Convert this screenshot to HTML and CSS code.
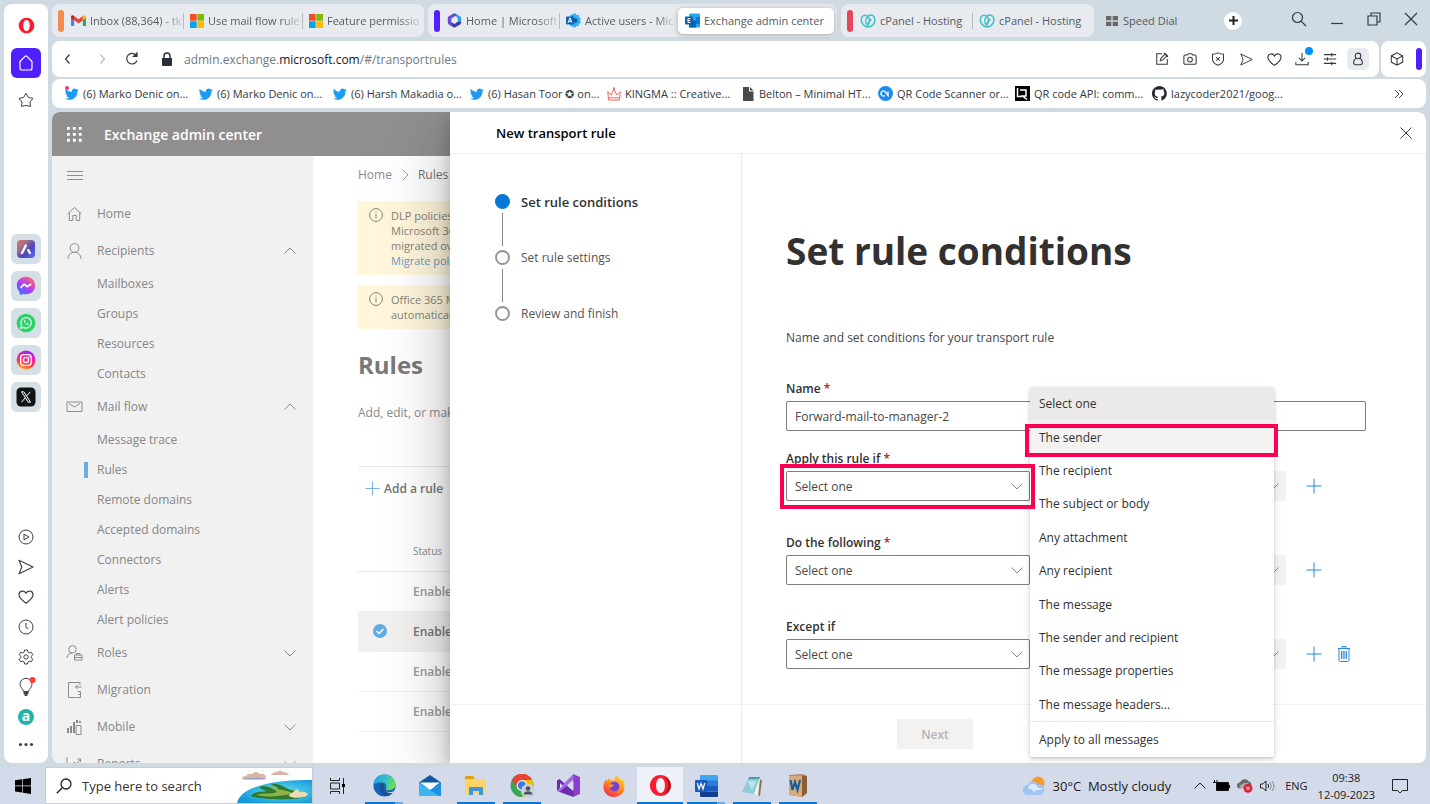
FILE: index.html
```html
<!DOCTYPE html>
<html lang="en">
<head>
    <meta charset="UTF-8" />
    <meta name="viewport" content="width=device-width, initial-scale=1.0" />
    <title>Exchange admin center</title>
    <link rel="stylesheet" href="styles.css">
</head>
<body>

    <!-- shared icons -->
    <svg class="sprite" aria-hidden="true">
        <symbol id="i-ms" viewBox="0 0 14 14">
            <path fill="#f25022" d="M0 0h6.7v6.7H0z"/><path fill="#7fba00" d="M7.3 0H14v6.7H7.3z"/>
            <path fill="#00a4ef" d="M0 7.3h6.7V14H0z"/><path fill="#ffb900" d="M7.3 7.3H14V14H7.3z"/>
        </symbol>
        <symbol id="i-twitter" viewBox="0 0 24 24">
            <path fill="#1d9bf0" d="M23.6 4.9c-.9.4-1.8.6-2.8.8 1-.6 1.8-1.6 2.1-2.7-.9.6-2 1-3.1 1.2A4.9 4.9 0 0 0 11.5 8.600A13.900 13.900 0 0 1 1.400 3.500a4.900 4.900 0 0 0 1.500 6.500c-.8 0-1.600-.2-2.200-.6v.1c0 2.400 1.700 4.300 3.900 4.800-.7.2-1.500.2-2.200.1.600 1.900 2.400 3.300 4.600 3.400A9.800 9.800 0 0 1-.2 19.800a13.900 13.900 0 0 0 7.500 2.200c9.100 0 14-7.500 14-14v-.6c1-.7 1.800-1.600 2.300-2.500z"/>
        </symbol>
        <symbol id="i-godaddy" viewBox="0 0 16 16">
            <g fill="none" stroke="#3fc1c9" stroke-width="1.500">
                <path d="M7.500 14C3.500 13 .8 9.500 1.300 6 1.800 2.300 5.500 1.200 8 3.800c2 2.200 1.800 5.200.2 7.400"/>
                <path d="M7.500 14.300c4.800-.3 8-4.300 7.300-8.500C14.200 2 10.500.8 8 3.200 5.500 5.600 5 9 7 11.500M8.500 14c-1.200-1.500-.8-3.500.8-5.500l2-2.500"/>
            </g>
        </symbol>
        <symbol id="i-down" viewBox="0 0 12 12"><path fill="none" stroke="currentColor" d="M.5 3.500 6 9l5.500-5.500"/></symbol>
        <symbol id="i-up" viewBox="0 0 12 12"><path fill="none" stroke="currentColor" d="M.5 8.500 6 3l5.500 5.500"/></symbol>
        <symbol id="i-plus" viewBox="0 0 16 16"><path fill="none" stroke="currentColor" d="M8 .5v15M.5 8h15"/></symbol>
        <symbol id="i-info" viewBox="0 0 14 14"><circle cx="7" cy="7" r="6.400" fill="none" stroke="currentColor"/><path stroke="currentColor" d="M7 6v4.500M7 3.500v1.200"/></symbol>
        <symbol id="i-heart" viewBox="0 0 16 16"><path fill="none" stroke="currentColor" stroke-width="1.200" d="M8 14.300C4 11.500 1 8.800 1 5.600 1 1.600 6.200.8 8 4.200 9.800.8 15 1.600 15 5.600c0 3.200-3 5.900-7 8.700z"/></symbol>
        <symbol id="i-send" viewBox="0 0 16 16"><path fill="none" stroke="currentColor" stroke-width="1.200" stroke-linejoin="round" d="M1 1.200 15 8 1 14.800 3.800 8z"/></symbol>
        <symbol id="i-opera" viewBox="0 0 24 24">
            <path fill="#ff1b2d" fill-rule="evenodd" d="M12 1C5.900 1 1 5.900 1 12s4.900 11 11 11 11-4.900 11-11S18.100 1 12 1zm0 3.200c3 0 4.600 3.600 4.600 7.800s-1.600 7.800-4.600 7.800S7.400 16.200 7.400 12 9 4.200 12 4.200z"/>
        </symbol>
    </svg>

    <div class="browser">

        <aside class="speedbar">
            <div class="speedbar-top">
                <svg class="logo" viewBox="0 0 24 24"><use href="#i-opera"/></svg>
                <button class="home-btn" aria-label="Home">
                    <svg width="16" height="18" viewBox="0 0 16 18" fill="none" stroke="#fff" stroke-width="1.200"><path d="M2 7.500 7 2.300q1-1 2 0l5 5.200V14q0 2-2 2H4q-2 0-2-2z"/></svg>
                </button>
                <svg class="side-icon" viewBox="0 0 16 16"><path d="M8 1.200 10.300 5.400 15 6.400 12 10 12.500 14.500 8 13.300 3.500 14.500 4 10 1 6.400 5.700 5.400z"/></svg>
            </div>
            <div class="speedbar-apps">
                <button class="app" aria-label="Aria">
                    <svg width="18" height="18" viewBox="0 0 18 18"><defs><linearGradient id="g1" x1="0" y1="0" x2="1" y2="1"><stop offset="0" stop-color="#e0715a"/><stop offset=".3" stop-color="#a8708c"/><stop offset=".6" stop-color="#4c48b8"/><stop offset="1" stop-color="#5b6cff"/></linearGradient></defs><rect width="18" height="18" rx="4" fill="url(#g1)"/><path d="m5 13 3.800-7.500M11.300 10l1.500 3" stroke="#fff" stroke-width="2.400" stroke-linecap="round"/></svg>
                </button>
                <button class="app" aria-label="Messenger">
                    <svg width="20" height="20" viewBox="0 0 20 20"><defs><linearGradient id="g2" x1="0" y1="1" x2=".8" y2="0"><stop offset="0" stop-color="#0a8cff"/><stop offset=".5" stop-color="#a83cff"/><stop offset="1" stop-color="#ff6a66"/></linearGradient></defs><path fill="url(#g2)" d="M10 .8C4.800.8.800 4.500.800 9.600c0 2.600 1.100 4.700 2.800 6.300l.2 3.200 3-1.200c1 .3 2.100.4 3.200.4 5.200 0 9.200-3.700 9.200-8.700S15.200.8 10 .8z"/><path d="m4.500 11.800 3.600-3.700 3 2.500 4.200-2.500" fill="none" stroke="#fff" stroke-width="1.800"/></svg>
                </button>
                <button class="app" aria-label="WhatsApp">
                    <svg width="20" height="20" viewBox="0 0 20 20"><circle cx="10" cy="10" r="9.300" fill="#2bd366"/><path d="m4.800 15.200.8-2.800a5.200 5.200 0 1 1 2 2z" fill="none" stroke="#fff" stroke-width="1.200"/><path d="M8 7.300c-.2 2.400 2 4.600 4.500 4.700l.3-1.200-1.500-.6-.8.600c-.8-.3-1.200-.8-1.500-1.500l.5-.7-.5-1.400z" fill="#fff"/></svg>
                </button>
                <button class="app" aria-label="Instagram">
                    <svg width="20" height="20" viewBox="0 0 20 20"><defs><linearGradient id="g3" x1=".2" y1="1" x2=".6" y2="0"><stop offset="0" stop-color="#ffc43a"/><stop offset=".35" stop-color="#ff3d3d"/><stop offset=".7" stop-color="#f01bb0"/><stop offset="1" stop-color="#8a2bff"/></linearGradient></defs><circle cx="10" cy="10" r="9.400" fill="url(#g3)"/><g fill="none" stroke="#fff" stroke-width="1.300"><rect x="4.700" y="4.700" width="10.600" height="10.600" rx="3"/><circle cx="10" cy="10" r="2.600"/></g><circle cx="13" cy="7" r=".8" fill="#fff"/></svg>
                </button>
                <button class="app" aria-label="X">
                    <svg width="20" height="20" viewBox="0 0 20 20"><rect x=".5" y=".5" width="19" height="19" rx="4.500" fill="#111417"/><path d="M5.500 4.800h2.300l6.700 10.400h-2.300zM14.300 4.800l-4 4.500M9.200 10.900l-3.700 4.300" fill="none" stroke="#fff"/></svg>
                </button>
            </div>
            <div class="speedbar-tools">
                <svg class="side-icon" viewBox="0 0 16 16"><circle cx="8" cy="8" r="7"/><path d="M6 5.200 11 8l-5 2.800z"/></svg>
                <svg class="side-icon"><use href="#i-send"/></svg>
                <svg class="side-icon"><use href="#i-heart"/></svg>
                <svg class="side-icon" viewBox="0 0 16 16"><circle cx="8" cy="8" r="7"/><path d="M8 4v4.500l2.500 1.200"/></svg>
                <svg class="side-icon" viewBox="0 0 16 16"><path d="M6.600 1h2.800l.5 2 1.500.9 2-.6 1.400 2.400L13.300 7.200v1.600l1.500 1.500-1.400 2.400-2-.6-1.500.9-.5 2H6.600l-.5-2-1.500-.9-2 .6-1.400-2.400 1.500-1.500V7.200L1.200 5.700l1.400-2.400 2 .6L6.100 3z"/><circle cx="8" cy="8" r="2.200"/></svg>
                <svg class="side-icon bulb" viewBox="0 0 16 20"><path d="M5.500 14.500C5.500 12 2 11 2 7.300a6 6 0 0 1 12 0c0 3.700-3.500 4.700-3.500 7.200z"/><path d="M5.500 16h5M6.500 18h3" stroke-width="1.800"/><circle class="dot" cx="14.500" cy="3" r="3"/></svg>
                <span class="alexa">a</span>
                <svg class="side-icon more" viewBox="0 0 16 16"><circle cx="2.500" cy="5.500" r="1.600"/><circle cx="8" cy="5.500" r="1.600"/><circle cx="13.500" cy="5.500" r="1.600"/></svg>
            </div>
        </aside>

        <div class="window">

            <header class="tabs">
                <div class="tab-group">
                    <span class="group-mark orange"></span>
                    <a class="tab" href="#">
                        <svg width="15" height="14" viewBox="0 0 15 14"><path fill="#4285f4" d="M0 3v9h3.200V5.500z"/><path fill="#34a853" d="M15 3v9h-3.200V5.500z"/><path fill="#ea4335" d="M3.200 2 7.500 5.300 11.800 2v4.200L7.500 9.500 3.200 6.200z"/><path fill="#c5221f" d="M0 3c0-1.800 1.900-2.200 3.200-1v4.200L0 4z"/><path fill="#fbbc04" d="M15 3c0-1.800-1.900-2.200-3.200-1v4.200L15 4z"/></svg>
                        <span class="cut">Inbox (88,364) - tk</span>
                    </a>
                    <a class="tab" href="#"><svg width="14" height="14"><use href="#i-ms"/></svg><span class="cut">Use mail flow rule</span></a>
                    <a class="tab" href="#"><svg width="14" height="14"><use href="#i-ms"/></svg><span class="cut">Feature permissio</span></a>
                </div>
                <div class="tab-group">
                    <span class="group-mark purple"></span>
                    <a class="tab" href="#">
                        <svg width="15" height="15" viewBox="0 0 15 15"><path fill="#6a4bd8" d="M6.500.5 1.800 3.300Q.8 4 .8 5.200v4.600q0 1.200 1 1.800l2.400 1.300V6.500q0-1 .8-1.500L9 2.700V.9Q7.800-.2 6.500.5z"/><path fill="#2ba3e3" d="M13.300 3.400 9 .8v2.400q1.800 1 1.800 3V9l3.400 1V5.200q0-1.200-.9-1.800z"/><path fill="#3b3fa8" d="m4.200 12.900 2.400 1.400q.9.500 1.800 0l4.800-2.800q1-.7 1-2.200l-3.500-.6L7.500 11l-3.300-2z"/></svg>
                        <span class="cut">Home | Microsoft</span>
                    </a>
                    <a class="tab" href="#">
                        <svg width="15" height="15" viewBox="0 0 15 15"><path fill="#31b2f0" d="m9 0 1.300 1.900 2.400-.2.200 2.400L15 5.500 13.900 7.600 15 9.700l-2.100 1.200-.2 2.400-2.400-.2L9 15l-2.100-1.200L4 13V2l2.900-.7z"/><circle cx="9.300" cy="7.600" r="2.300" fill="#0b5fa8"/><rect y="3.500" width="8" height="8" rx="1" fill="#0f5fb4"/><path stroke="#fff" fill="none" d="m2 9.800 2-5 2 5M2.800 8.300h2.400"/></svg>
                        <span class="cut">Active users - Mic</span>
                    </a>
                    <a class="tab active" href="#">
                        <svg width="15" height="15" viewBox="0 0 15 15"><rect x="4" y=".5" width="11" height="14" rx="1" fill="#28a8ea"/><path fill="#0364b8" d="M4 7.500h7v7H4z"/><path fill="#0f78d4" d="M11 4h4v7h-4z"/><rect y="3.500" width="8" height="8" rx="1" fill="#0f5fb4"/><path stroke="#fff" fill="none" d="M5.500 5.500H3v4h2.500M3 7.500h2.200"/></svg>
                        <span>Exchange admin center</span>
                    </a>
                </div>
                <div class="tab-group">
                    <span class="group-mark red"></span>
                    <a class="tab" href="#"><svg width="16" height="16"><use href="#i-godaddy"/></svg><span>cPanel - Hosting</span></a>
                    <a class="tab" href="#"><svg width="16" height="16"><use href="#i-godaddy"/></svg><span>cPanel - Hosting</span></a>
                </div>
                <a class="speed-dial" href="#">
                    <svg width="12" height="10" viewBox="0 0 12 10"><path fill="#666" d="M0 0h5.300v4.300H0zM6.700 0H12v4.300H6.700zM0 5.700h5.300V10H0zM6.700 5.700H12V10H6.700z"/></svg>
                    Speed Dial
                </a>
                <button class="new-tab" aria-label="New tab"><svg width="9" height="9" viewBox="0 0 9 9"><path stroke="#222" stroke-width="2" d="M4.500 0v9M0 4.500h9"/></svg></button>
                <div class="win-buttons">
                    <button aria-label="Search tabs"><svg width="16" height="16" viewBox="0 0 16 16"><circle cx="6.500" cy="6.500" r="5"/><path d="m10.300 10.300 4.700 4.700"/></svg></button>
                    <button aria-label="Minimize"><svg width="14" height="14" viewBox="0 0 14 14"><path d="M1 11.500h12"/></svg></button>
                    <button aria-label="Restore"><svg width="14" height="14" viewBox="0 0 14 14"><path d="M1 4h9v9H1zM4 4V1h9v9h-3"/></svg></button>
                    <button aria-label="Close"><svg width="14" height="14" viewBox="0 0 14 14"><path d="m1 1 12 12M13 1 1 13"/></svg></button>
                </div>
            </header>

            <div class="toolbar">
                <div class="address">
                    <button aria-label="Back"><svg width="16" height="16" viewBox="0 0 16 16"><path d="m9.500 3.500-4 4.500 4 4.500"/></svg></button>
                    <button class="off" aria-label="Forward"><svg width="16" height="16" viewBox="0 0 16 16"><path d="m8.500 3.500 4 4.500-4 4.500"/></svg></button>
                    <button aria-label="Reload"><svg width="16" height="16" viewBox="0 0 16 16"><path d="M13 9.500A5.300 5.300 0 1 1 12 4.200"/><path d="M13 2v3.500H9.500z" fill="#333"/></svg></button>
                    <svg class="lock" width="12" height="14" viewBox="0 0 12 14"><path fill="#2a3037" d="M1 6h10v7q0 1-1 1H2q-1 0-1-1z"/><path fill="none" stroke="#2a3037" stroke-width="1.400" d="M3 6V4q0-3 3-3t3 3v2"/></svg>
                    <span class="url">admin.exchange.<b>microsoft.com</b>/#/transportrules</span>
                    <div class="actions">
                        <button aria-label="Edit page"><svg width="14" height="14" viewBox="0 0 16 16"><path d="M8 2H2v12h12V8"/><path d="m6 10 3-1 5-5-2-2-5 5zM10 1l5 5"/></svg></button>
                        <button aria-label="Snapshot"><svg width="14" height="14" viewBox="0 0 16 16"><path d="M1 5q0-1.500 1.500-1.500H5L6 2h4l1 1.500h2.500Q15 3.500 15 5v7.500q0 1.500-1.500 1.500h-11Q1 14 1 12.500z"/><circle cx="8" cy="8.700" r="2.700"/></svg></button>
                        <button aria-label="Ad blocker"><svg width="14" height="14" viewBox="0 0 16 16"><path d="M8 1q3 1.500 6.300 1.500V8q0 5-6.300 7.200Q1.700 13 1.700 8V2.500Q5 2.500 8 1zM6 6l4 4M10 6l-4 4"/></svg></button>
                        <button aria-label="Send to My Flow"><svg width="13" height="13"><use href="#i-send"/></svg></button>
                        <button aria-label="Bookmark"><svg width="15" height="15"><use href="#i-heart"/></svg></button>
                        <button class="dl" aria-label="Downloads"><svg width="14" height="14" viewBox="0 0 16 16"><path d="M8 1v9M4.500 6.800 8 10.300l3.500-3.500M1 11v3.500h14V11"/></svg></button>
                        <button aria-label="Easy setup"><svg width="14" height="14" viewBox="0 0 16 16"><path d="M1 3h14M1 8h14M1 13h14M10 1v4M5 6v4M10 11v4"/></svg></button>
                        <button class="user" aria-label="Profile"><svg width="14" height="14" viewBox="0 0 16 16"><circle cx="8" cy="4.500" r="3.200"/><path d="M5.500 7.500Q3 9 3 12q0 2.500 2.500 2.500h5Q13 14.500 13 12q0-3-2.500-4.500"/></svg></button>
                    </div>
                </div>
                <div class="corner">
                    <button aria-label="Workspaces"><svg width="14" height="14" viewBox="0 0 16 16"><path d="m8 1 6.500 3.500v7L8 15l-6.500-3.500v-7zM1.500 4.500 8 8l6.500-3.500M8 8v7"/></svg></button>
                    <span class="group-mark purple"></span>
                </div>
            </div>

            <nav class="bookmarks">
                <a class="short pinned" href="#"><svg width="14" height="14"><use href="#i-twitter"/></svg>(6) Marko Denic on...</a>
                <a class="short" href="#"><svg width="14" height="14"><use href="#i-twitter"/></svg>(6) Marko Denic on...</a>
                <a href="#"><svg width="14" height="14"><use href="#i-twitter"/></svg>(6) Harsh Makadia o...</a>
                <a href="#"><svg width="14" height="14"><use href="#i-twitter"/></svg>(6) Hasan Toor ✪ on...</a>
                <a class="short" href="#"><svg width="14" height="14" viewBox="0 0 14 14"><path fill="none" stroke="#f2605f" d="M1.500 13 .8 4.500 4.200 8 7 2l2.800 6 3.400-3.500-.7 8.500zM1.500 10.800h11"/><circle cx="7" cy="1.200" r="1" fill="#f2605f"/></svg>KINGMA :: Creative...</a>
                <a href="#"><svg width="14" height="14" viewBox="0 0 14 14"><path fill="#4a4a4a" d="M2 0h6v4.500h4.500V14H2zM9 0l3.500 3.500H9z"/></svg>Belton – Minimal HT...</a>
                <a href="#"><svg width="15" height="15" viewBox="0 0 15 15"><circle cx="7.500" cy="7.500" r="7.500" fill="#1a8cf0"/><path fill="none" stroke="#fff" stroke-width="1.300" d="M7 9.500a2.500 2.500 0 1 1 0-4l3 4V5.500"/></svg>QR Code Scanner or...</a>
                <a href="#"><svg width="15" height="15" viewBox="0 0 15 15"><path d="M0 0h15v15H0z"/><path fill="none" stroke="#fff" stroke-width="1.500" d="M2.500 2v8.500H7M5 4h6v6H7.500L12 13.500"/></svg>QR code API: comm...</a>
                <a href="#"><svg width="15" height="15" viewBox="0 0 16 16"><path fill="#24292f" d="M8 0a8 8 0 0 0-2.500 15.600c.4.100.5-.2.500-.4v-1.400c-2.200.5-2.700-1-2.700-1-.4-.9-.9-1.200-.9-1.200-.7-.5.100-.5.100-.5.800.1 1.200.8 1.200.8.700 1.300 1.900.9 2.300.7.100-.5.300-.9.500-1.100-1.800-.2-3.600-.9-3.600-4 0-.9.300-1.600.8-2.100-.1-.2-.4-1 .1-2.100 0 0 .7-.2 2.200.8a7.500 7.500 0 0 1 4 0c1.500-1 2.200-.8 2.200-.8.400 1.100.2 1.900.1 2.100.5.600.8 1.300.8 2.100 0 3.100-1.900 3.700-3.700 3.900.3.300.6.800.6 1.500v2.200c0 .2.100.5.600.4A8 8 0 0 0 8 0z"/></svg>lazycoder2021/goog...</a>
                <button class="overflow" aria-label="More bookmarks"><svg width="10" height="8" viewBox="0 0 10 8"><path fill="none" stroke="#444" d="m1 0 4 4-4 4M5 0l4 4-4 4"/></svg></button>
            </nav>

            <!-- Exchange admin center -->
            <div class="page">
                <header class="suite">
                    <svg width="15" height="15" viewBox="0 0 16 16" fill="#fff"><path d="M0 0h3v3H0zM6.300 0h3v3h-3zM12.600 0h3v3h-3zM0 6.300h3v3H0zM6.300 6.300h3v3h-3zM12.600 6.300h3v3h-3zM0 12.600h3v3H0zM6.300 12.600h3v3h-3zM12.600 12.600h3v3h-3z"/></svg>
                    <span>Exchange admin center</span>
                </header>

                <div class="body">
                    <nav class="side-nav">
                        <button class="burger" aria-label="Collapse navigation"><svg width="16" height="10" viewBox="0 0 16 10"><path stroke="#8c8c8c" d="M0 .5h16M0 4.500h16M0 8.500h16"/></svg></button>
                        <a class="top" href="#"><svg viewBox="0 0 16 16"><path d="M1 8 8 1.500 15 8M2.800 6.500V14.500h3.500v-5h3.400v5h3.500v-8"/></svg>Home</a>
                        <a class="top" href="#"><svg viewBox="0 0 16 16"><circle cx="8" cy="5" r="4.400"/><path d="M1.500 16c0-9 13-9 13 0"/></svg>Recipients<svg class="chev"><use href="#i-up"/></svg></a>
                        <a class="sub" href="#">Mailboxes</a>
                        <a class="sub" href="#">Groups</a>
                        <a class="sub" href="#">Resources</a>
                        <a class="sub" href="#">Contacts</a>
                        <a class="top" href="#"><svg viewBox="0 0 16 16"><path d="M.5 3h15v9.500H.5zM2.500 4.500 8 8l5.500-3.500"/></svg>Mail flow<svg class="chev"><use href="#i-up"/></svg></a>
                        <a class="sub" href="#">Message trace</a>
                        <a class="sub current" href="#">Rules</a>
                        <a class="sub" href="#">Remote domains</a>
                        <a class="sub" href="#">Accepted domains</a>
                        <a class="sub" href="#">Connectors</a>
                        <a class="sub" href="#">Alerts</a>
                        <a class="sub" href="#">Alert policies</a>
                        <a class="top" href="#"><svg viewBox="0 0 16 16"><circle cx="6" cy="4.300" r="3.700"/><path d="M.5 13C.5 9.500 3 8 6 8M8 10h7.500v5H8zM10 10V8.500h3.500V10M8 12.500h7.500"/></svg>Roles<svg class="chev"><use href="#i-down"/></svg></a>
                        <a class="top" href="#"><svg viewBox="0 0 16 16"><path d="M13.500 3V.5H2v15h8M15 5H9M11 3 9 5l2 2M11 9.500h3v6h-3.500M12 12.500h2" /></svg>Migration</a>
                        <a class="top" href="#"><svg viewBox="0 0 16 16"><path d="M1.500 9v5M4.500 7v7M7.500 3v11M10.500 1v3M13.500 2v2" stroke-width="2"/><path d="M9.500 6.500h5v9h-5z"/></svg>Mobile<svg class="chev"><use href="#i-down"/></svg></a>
                        <a class="top" href="#"><svg viewBox="0 0 16 16"><path d="M.5 1v14h15M3 12l5-6 2 2 4-5M11 3h3v3"/></svg>Reports<svg class="chev"><use href="#i-down"/></svg></a>
                    </nav>

                    <main class="rules">
                        <div class="crumbs"><a href="#">Home</a><svg width="8" height="12" viewBox="0 0 8 12"><path fill="none" stroke="#999" d="m1.500.5 5.500 5.500-5.500 5.500"/></svg><a href="#" class="here">Rules</a></div>
                        <div class="notice">
                            <svg width="14" height="14"><use href="#i-info"/></svg>
                            <p>DLP policies<br>Microsoft 365<br>migrated over<br><a href="#">Migrate policies</a></p>
                        </div>
                        <div class="notice">
                            <svg width="14" height="14"><use href="#i-info"/></svg>
                            <p>Office 365 M<br>automatically</p>
                        </div>
                        <h2>Rules</h2>
                        <p class="intro">Add, edit, or make</p>
                        <div class="commands"><button><svg width="15" height="15"><use href="#i-plus"/></svg>Add a rule</button></div>
                        <table>
                            <thead><tr><th class="pick"></th><th>Status</th></tr></thead>
                            <tbody>
                                <tr><td></td><td>Enabled</td></tr>
                                <tr class="selected"><td><svg width="14" height="14" viewBox="0 0 14 14"><circle cx="7" cy="7" r="7" fill="#62abe6"/><path d="m3.500 7 2.500 2.500 4.500-4.500" fill="none" stroke="#fff" stroke-width="1.500"/></svg></td><td>Enabled</td></tr>
                                <tr><td></td><td>Enabled</td></tr>
                                <tr><td></td><td>Enabled</td></tr>
                            </tbody>
                        </table>
                    </main>
                </div>

                <section class="panel">
                    <header class="panel-head">
                        <span>New transport rule</span>
                        <button aria-label="Close panel"><svg width="12" height="12" viewBox="0 0 12 12"><path stroke="#444" d="m.5.5 11 11M11.500.5l-11 11"/></svg></button>
                    </header>
                    <div class="panel-body">
                        <ol class="steps">
                            <li class="on">Set rule conditions</li>
                            <li>Set rule settings</li>
                            <li>Review and finish</li>
                        </ol>
                        <form class="conditions">
                            <h1>Set rule conditions</h1>
                            <p>Name and set conditions for your transport rule</p>

                            <div class="field">
                                <label for="name">Name <i>*</i></label>
                                <input type="text" id="name" value="Forward-mail-to-manager-2">
                            </div>

                            <div class="field">
                                <label for="apply">Apply this rule if <i>*</i></label>
                                <div class="row">
                                    <div class="select"><select id="apply"><option>Select one</option></select><svg><use href="#i-down"/></svg></div>
                                    <div class="select off"><select disabled aria-label="Condition"><option></option></select><svg><use href="#i-down"/></svg></div>
                                    <button type="button" aria-label="Add condition"><svg width="16" height="16"><use href="#i-plus"/></svg></button>

                                    <div class="menu">
                                        <div class="options">
                                            <button type="button" class="picked">Select one</button>
                                            <button type="button" class="hover">The sender</button>
                                            <button type="button">The recipient</button>
                                            <button type="button">The subject or body</button>
                                            <button type="button">Any attachment</button>
                                            <button type="button">Any recipient</button>
                                            <button type="button">The message</button>
                                            <button type="button">The sender and recipient</button>
                                            <button type="button">The message properties</button>
                                            <button type="button">The message headers...</button>
                                        </div>
                                        <button type="button" class="all">Apply to all messages</button>
                                        <span class="mark mark-option"></span>
                                    </div>
                                    <span class="mark mark-select"></span>
                                </div>
                            </div>

                            <div class="field">
                                <label for="do">Do the following <i>*</i></label>
                                <div class="row">
                                    <div class="select"><select id="do"><option>Select one</option></select><svg><use href="#i-down"/></svg></div>
                                    <div class="select off"><select disabled aria-label="Action"><option></option></select><svg><use href="#i-down"/></svg></div>
                                    <button type="button" aria-label="Add action"><svg width="16" height="16"><use href="#i-plus"/></svg></button>
                                </div>
                            </div>

                            <div class="field">
                                <label for="except">Except if</label>
                                <div class="row">
                                    <div class="select"><select id="except"><option>Select one</option></select><svg><use href="#i-down"/></svg></div>
                                    <div class="select off"><select disabled aria-label="Exception"><option></option></select><svg><use href="#i-down"/></svg></div>
                                    <button type="button" aria-label="Add exception"><svg width="16" height="16"><use href="#i-plus"/></svg></button>
                                    <button type="button" aria-label="Delete exception"><svg width="12" height="16" viewBox="0 0 12 16"><path fill="none" stroke="currentColor" d="M0 2.500h12M4 2.500v-2h4v2M1 2.500v11.500q0 1.500 1.500 1.500h7q1.500 0 1.500-1.500V2.500M3.500 5v8M5.200 5v8M6.900 5v8M8.600 5v8"/></svg></button>
                                </div>
                            </div>
                        </form>
                    </div>
                    <footer class="panel-foot"><div><button disabled>Next</button></div></footer>
                </section>
            </div>
        </div>
    </div>

    <footer class="taskbar">
        <button class="start" aria-label="Start"><svg width="16" height="16" viewBox="0 0 16 16"><path d="M0 2.300 7 1.300V7.600H0zM7.700 1.200 16 0v7.600H7.700zM0 8.300h7v6.300l-7-1zM7.700 8.300H16V16l-8.300-1.200z"/></svg></button>
        <div class="search">
            <svg width="16" height="16" viewBox="0 0 16 16"><path fill="none" stroke="#222" stroke-width="1.300" d="M6 10 .8 15.200"/><circle cx="10" cy="6" r="5" fill="none" stroke="#222" stroke-width="1.300"/></svg>
            <input type="text" placeholder="Type here to search" aria-label="Search">
            <svg class="island" width="76" height="34" viewBox="0 0 76 34">
                <defs><radialGradient id="sea" cx=".6" cy=".5" r=".6"><stop offset="0" stop-color="#5fe3ee"/><stop offset="1" stop-color="#1899dc"/></radialGradient></defs>
                <path fill="url(#sea)" d="M1 34C4 19 34 10 76 11v23z"/>
                <path fill="#d8b5a6" d="M6 10q0-3 4-3 2-3 6-2 4-4 8 0 6-1 6 5zM35 6q2-3 6-3 3-3 6 0 5 0 6 3z"/>
                <path fill="#8d9bc8" d="M6 10.500q4-2 12-1.500 8-1 12 1.500z"/>
                <path fill="#2d7a2f" d="M15 27c3-5 10-4 16-5-8-2-10-4-4-5 8 1 10 3 16 4-2-4-6-4-8-6 8-1 12 3 20 6 10 1 15 4 17 6-8 5-50 4-57 0z"/>
                <path fill="#8fb14a" d="M20 26c8-3 16 0 21-3-2-3-8-4-8-6 6 0 8 4 14 4 6 1 10 3 8 4-12 3-28 3-35 1z"/>
                <path fill="#e8dcb0" d="M53 27c0-3 4-3 5-5 3-3 5-1 6 1 4-1 8 1 8 3-2 3-16 4-19 1z"/>
            </svg>
        </div>
        <div class="apps">
            <button aria-label="Task view"><svg width="18" height="16" viewBox="0 0 18 16"><path fill="none" stroke="#222" d="M1.500 0v2.500h9V0M1.500 5h9v6h-9zM1.500 16v-2.500h9V16M14.500 0v16"/><path d="M13 6h3v3h-3z"/></svg></button>
            <button class="open more" aria-label="Edge"><svg width="23" height="23" viewBox="0 0 24 24"><defs><linearGradient id="e1" x1="0" y1="0" x2="1" y2=".3"><stop offset="0" stop-color="#1b9de2"/><stop offset=".6" stop-color="#35c1c9"/><stop offset="1" stop-color="#67dd5a"/></linearGradient></defs><circle cx="12" cy="12" r="11.500" fill="#1564b4"/><path fill="url(#e1)" d="M.6 11C1 4.500 6 .5 12 .5c6.500 0 11.500 4.700 11.500 10 0 4-3 6.500-6.500 6.500-3 0-4-1-3.500-2 1.500-2.500-.5-6.500-4.500-6.500-4 0-7.400 1-8.400 2.500z"/><path fill="#1b4f94" d="M9 9.500c-3 3-3 10 4 13.300 4 .2 7.500-2 9-4.800-5 2.500-11 0-11-4.500 0-2 0-3-2-4z"/><path fill="#d3daea" d="M13.400 15c-2.400 2.500 4 6.500 9.600 2l.8.800-.8 1.200c-4 2-9.500 1-10.200-2.500z"/></svg></button>
            <button aria-label="Mail"><svg width="22" height="21" viewBox="0 0 22 21"><path fill="#0e59a4" d="M0 7.500 11 0l11 7.500V12H0z"/><path fill="#fff" d="M1 7.500h20L11 15z"/><path fill="#1b8fe4" d="M0 7.500 11 15l11-7.500V21H0z"/><path fill="#3cb4ef" d="M0 7.500 20 21H0z"/></svg></button>
            <button class="open" aria-label="File Explorer"><svg width="22" height="20" viewBox="0 0 22 20"><path fill="#e0a012" d="M0 1q0-1 1-1h7l2 3H0z"/><path fill="#ffd466" d="M0 3h21v15H0z"/><path fill="#3c97dc" d="M4 12q0-1 1-1h12q1 0 1 1v7h-4v-4H8v4H4z"/></svg></button>
            <button class="open" aria-label="Chrome"><svg width="25" height="24" viewBox="0 0 25 24"><circle cx="12" cy="11.500" r="11.500" fill="#34a853"/><path fill="#ea4335" d="M2 5.700a11.500 11.500 0 0 1 20 0L12 6.500 7 14z"/><path fill="#fbbc04" d="M22 5.700c3 6-.5 16-10 17.300l4.500-9L13 6.200z"/><circle cx="12" cy="11.500" r="5.400" fill="#fff"/><circle cx="12" cy="11.500" r="4.200" fill="#3b78e7"/><circle cx="18" cy="17" r="7" fill="#ccd1d8"/><circle cx="18" cy="14.500" r="2.300" fill="#4b5562"/><path fill="#4b5562" d="M13.500 20.500c0-4.500 9-4.500 9 0z"/></svg></button>
            <button aria-label="Visual Studio"><svg width="23" height="23" viewBox="0 0 23 23"><path fill="#8a3fd0" d="m16 0 7 3v17l-7 3z"/><path fill="#6b2bab" d="M0 6.500 2.500 5l14 12.500V23L2.500 18 0 16.500z"/><path fill="#a566e8" d="M16.500 0v5.500L2.500 18 0 16.500z"/><path fill="#d3daea" d="M3 9v5.500l2.800-2.700zM16.500 8v7.500l-4.700-3.800z"/></svg></button>
            <button aria-label="Firefox"><svg width="22" height="22" viewBox="0 0 22 22"><defs><linearGradient id="ff" x1=".8" y1="0" x2=".2" y2="1"><stop offset="0" stop-color="#ffd83a"/><stop offset=".5" stop-color="#ff8a16"/><stop offset="1" stop-color="#f0225c"/></linearGradient></defs><path fill="url(#ff)" d="M11 22C4.500 22 .5 17.500.5 12c0-3 1.200-6.500 2.500-8l.8 2.500L6 3l1.500 2.500L12 5c-.5-2 .5-4 1.500-5 1 2.500 4 3.500 5 6l.8-1.500C21 7 21.500 9 21.500 12c0 5.500-4.500 10-10.500 10z"/><circle cx="11.500" cy="11.500" r="4.800" fill="#7340d0"/><path fill="#ff9a1c" d="M5 10.500c2-2 4-1.500 6-.5-1 1.500-2.500 1.500-3 3z"/></svg></button>
            <button class="open focus" aria-label="Opera"><svg width="23" height="23" viewBox="0 0 24 24"><use href="#i-opera"/><path fill="#9e0d19" d="M16 3c6 5 5.500 13 0 18 7-2 10-14 0-18z"/></svg></button>
            <button class="open more" aria-label="Word"><svg width="23" height="22" viewBox="0 0 23 22"><path fill="#41a5ee" d="M5 1q0-1 1-1h16q1 0 1 1v5H5z"/><path fill="#2b7cd3" d="M5 5.500h18V11H5z"/><path fill="#185abd" d="M5 11h18v5.500H5z"/><path fill="#103f91" d="M5 16.500h18V21q0 1-1 1H6q-1 0-1-1z"/><rect y="5" width="12" height="12" rx="1" fill="#185abd"/><path fill="none" stroke="#fff" stroke-width="1.200" d="m2.300 8 1.700 6 2-5.500L8 14l1.700-6"/></svg></button>
            <button class="open" aria-label="Notepad"><svg width="22" height="22" viewBox="0 0 22 22"><path fill="#8a7a50" d="m18 4 3 1-2 16-3-1z"/><path fill="#f0f3f5" d="m16 3 3 1-2 17-5-3z"/><path fill="#8fcbd8" d="M8 2h11l-6 17-12-2z"/><path fill="#4d97a8" d="M8 2h11l-.7 2H7.200z"/><path fill="#b9e4ec" d="M6.500 6h9L11 15z"/></svg></button>
            <button class="open" aria-label="Writer"><svg width="20" height="23" viewBox="0 0 20 23"><path fill="#b98555" d="m1 1 13-1 5 2v17l-5 4-13-2z"/><path fill="#d9ab7c" d="m1 2 13-.5V23L1 21z"/><path fill="#8b5e3a" d="m14 1.500 5 .5v17l-5 4z"/><path fill="none" stroke="#195f97" stroke-width="2.200" d="m2.500 6 2 10 2.500-8 2.500 8L12 6"/></svg></button>
        </div>
        <div class="tray">
            <svg width="24" height="20" viewBox="0 0 24 20"><circle cx="16" cy="7" r="6.500" fill="#f79a2e"/><path fill="#9fc3f3" d="M6 19a5 5 0 0 1-.5-10C7 4 14 4 15.500 8.500 20 7.500 23 11 22 15q-.8 4-5 4z"/><path fill="#dce9fb" d="M6 13q0-5 5-5 4 0 5 4 3-1 5 2-8-1-9 3-2-5-6-4z"/></svg>
            <span class="weather">30°C&nbsp; Mostly cloudy</span>
            <svg class="up" width="12" height="12"><use href="#i-up"/></svg>
            <svg width="17" height="12" viewBox="0 0 17 12"><path d="M4 3h11v7H4zM16 5h1v3h-1z"/><path fill="none" stroke="#111" d="M3.500 2.500h12v8h-12zM0 2.500h3M1.500 0v2M4 0v3"/></svg>
            <svg width="16" height="15" viewBox="0 0 16 15"><path fill="#666" d="M3 10.500a3 3 0 0 1 0-6C5 .5 10 .5 11.500 3.500 14 3.500 15 6 14 8z"/><path fill="#aaa" d="M2 9c2-3 5-5 10-4L5 10.500z"/><circle cx="11" cy="10.300" r="4.500" fill="#d92232"/><path stroke="#fff" d="m9.300 8.600 3.400 3.400M12.700 8.600 9.300 12"/></svg>
            <svg width="15" height="14" viewBox="0 0 15 14"><path fill="none" stroke="#222" d="M.5 5h2.300L6 2v10L2.800 9H.5zM8 5q1.200 2 0 4"/><path fill="none" stroke="#888" d="M10 3.500q2.500 3.500 0 7M12 2q4 5 0 10"/></svg>
            <span class="lang">ENG</span>
            <span class="clock">09:38<br>12-09-2023</span>
            <svg width="16" height="16" viewBox="0 0 16 16"><path fill="none" stroke="#222" d="M.5 1.500h15v11h-5L8 15l-2.500-2.500h-5z"/></svg>
        </div>
    </footer>

</body>
</html>
```
FILE: styles.css
```css
*,
*::before,
*::after {
    box-sizing: border-box;
}

body {
    margin: 0;
    height: 100vh;
    display: flex;
    flex-direction: column;
    overflow: hidden;
    background: #cfdae3;
    color: #323130;
    font-family: "Open Sans", "Noto Sans", sans-serif;
    font-size: 12px;
}

button {
    border: 0;
    padding: 0;
    background: none;
    font: inherit;
    color: inherit;
    cursor: pointer;
}

a {
    color: inherit;
    text-decoration: none;
}

h1, h2, p, ol {
    margin: 0;
    padding: 0;
}

svg {
    display: block;
    flex: none;
}

.sprite {
    position: absolute;
    width: 0;
    height: 0;
}

/* browser */

.browser {
    flex: 1;
    min-height: 0;
    display: flex;
    gap: 4px;
    padding: 4px;
}

.speedbar {
    width: 44px;
    flex: none;
    display: flex;
    flex-direction: column;
    align-items: center;
    background: #fff;
    border-radius: 8px;
    color: #3c444c;
}

.speedbar-top,
.speedbar-apps,
.speedbar-tools {
    display: flex;
    flex-direction: column;
    align-items: center;
}

.speedbar-top {
    gap: 14px;
    padding-top: 13px;
}

.logo {
    width: 17px;
    height: 17px;
}

.home-btn {
    width: 30px;
    height: 30px;
    border-radius: 6px;
    background: #4f1fff;
    display: flex;
    align-items: center;
    justify-content: center;
}

.side-icon {
    width: 16px;
    height: 16px;
    fill: none;
    stroke: #3c444c;
}

.side-icon.bulb {
    height: 20px;
    overflow: visible;
    margin: -2px 0;
}

.side-icon .dot {
    fill: #ff3b30;
    stroke: none;
}

.side-icon.more {
    fill: #3c444c;
    stroke: none;
}

.speedbar-apps {
    margin-top: 126px;
    gap: 7px;
}

.app {
    width: 30px;
    height: 30px;
    border-radius: 6px;
    background: #d5dfe6;
    display: flex;
    align-items: center;
    justify-content: center;
}

.speedbar-tools {
    margin-top: auto;
    padding-bottom: 8px;
    gap: 14px;
}

.alexa {
    width: 16px;
    height: 16px;
    border-radius: 8px;
    background: #1fb5a8;
    color: #fff;
    font-size: 14px;
    font-weight: 700;
    line-height: 14px;
    text-align: center;
}

.window {
    flex: 1;
    min-width: 0;
    display: flex;
    flex-direction: column;
}

/* tabs */

.tabs {
    display: flex;
    align-items: center;
    height: 33px;
    margin-bottom: 4px;
    font-size: 11px;
    color: #555b60;
}

.tab-group {
    display: flex;
    align-items: center;
    height: 33px;
    padding: 0 3px 0 6px;
    margin-right: 4px;
    border-radius: 8px;
    background: #e7ebef;
}

.group-mark {
    width: 6px;
    height: 22px;
    border-radius: 3px;
}

.orange { background: #f28b4b; }
.purple { background: #4f1fff; }
.red { background: #e5485d; }

.tab {
    display: flex;
    align-items: center;
    gap: 4px;
    width: 119px;
    height: 26px;
    padding-left: 7px;
    white-space: nowrap;
}

.tab .cut {
    mask-image: linear-gradient(90deg, #000 78%, rgba(0, 0, 0, 0.2));
}

.tab + .tab:not(.active) {
    background: linear-gradient(#b5bbc0, #b5bbc0) no-repeat 0 50% / 1px 16px;
}

.tab.active {
    width: 156px;
    border-radius: 5px;
    background: #fff;
    box-shadow: 0 1px 5px rgba(0, 0, 0, 0.3);
}

.speed-dial {
    display: flex;
    align-items: center;
    gap: 5px;
    margin-left: 8px;
}

.new-tab {
    width: 18px;
    height: 18px;
    margin-left: 47px;
    border-radius: 9px;
    background: #fff;
    display: flex;
    align-items: center;
    justify-content: center;
}

.win-buttons {
    display: flex;
    gap: 23px;
    margin-left: auto;
    margin-right: 8px;
    padding-bottom: 3px;
}

.win-buttons svg,
.toolbar svg {
    fill: none;
    stroke: #333a40;
    stroke-width: 1.2;
    color: #333a40;
}

/* address bar */

.toolbar {
    display: flex;
    gap: 2px;
    height: 36px;
    margin-bottom: 2px;
}

.address,
.corner {
    display: flex;
    align-items: center;
    background: #fff;
    border-radius: 8px;
}

.address {
    flex: 1;
    padding: 0 10px 0 8px;
    gap: 16px;
}

.address .off svg {
    stroke: #b5b9bd;
}

.address .lock {
    margin-left: 5px;
    stroke: none;
}

.url {
    margin-left: -5px;
    font-size: 11px;
    color: #6c7a86;
    font-size: 12px;
}

.url b {
    font-weight: 400;
    color: #15181b;
}

.actions {
    display: flex;
    margin-left: auto;
}

.actions button {
    width: 28px;
    height: 22px;
    display: flex;
    align-items: center;
    justify-content: center;
    position: relative;
}

.actions .user {
    width: 22px;
    margin-left: 3px;
    border-radius: 5px;
    background: #e7ebef;
}

.dl::after {
    content: "";
    position: absolute;
    top: -1px;
    right: 3px;
    width: 8px;
    height: 8px;
    border-radius: 4px;
    background: #0090ff;
}

.corner {
    gap: 12px;
    padding: 0 4px 0 9px;
}

/* bookmarks */

.bookmarks {
    display: flex;
    align-items: center;
    height: 29px;
    margin-bottom: 4px;
    padding: 0 22px 0 13px;
    background: #fff;
    border-radius: 8px;
    font-size: 11px;
    color: #33383d;
}

.bookmarks a {
    display: flex;
    align-items: center;
    gap: 4px;
    flex: 0 0 137px;
    white-space: nowrap;
    position: relative;
}

.bookmarks .short {
    flex-basis: 134px;
}

.bookmarks .pinned::before {
    content: "";
    position: absolute;
    left: 0;
    top: 0;
    width: 4px;
    height: 4px;
    border-radius: 2px;
    background: #ff2f7d;
}

.overflow {
    margin-left: auto;
}

/* page */

.page {
    flex: 1;
    min-height: 0;
    display: flex;
    flex-direction: column;
    position: relative;
    overflow: hidden;
    border-radius: 8px;
    background: #fff;
}

.suite {
    display: flex;
    align-items: center;
    gap: 22px;
    height: 44px;
    flex: none;
    padding-left: 15px;
    background: #908f8e;
    color: #fff;
    font-size: 14px;
    font-weight: 600;
}

.body {
    flex: 1;
    min-height: 0;
    display: flex;
}

.side-nav {
    width: 261px;
    flex: none;
    overflow: hidden;
    background: #f1f1f1;
    color: #868686;
}

.burger {
    display: flex;
    align-items: center;
    height: 39px;
    padding-left: 15px;
}

.top {
    display: flex;
    align-items: center;
    height: 37px;
    padding: 0 17px 0 14px;
    gap: 14px;
}

.top svg {
    width: 17px;
    height: 16px;
    fill: none;
    stroke: #8c8c8c;
}

.top .chev {
    width: 12px;
    height: 12px;
    margin-left: auto;
    color: #8c8c8c;
}

.sub {
    display: block;
    padding-left: 45px;
    line-height: 30px;
}

.sub + .top {
    margin-top: -1px;
}

.sub.current {
    background: linear-gradient(#69afe5, #69afe5) no-repeat 32px 50% / 4px 16px;
}

.rules {
    flex: 1;
    min-width: 0;
    padding: 8px 32px 0 45px;
    color: #8a8a8a;
}

.crumbs {
    display: flex;
    align-items: center;
    gap: 9px;
    height: 21px;
    margin-bottom: 16px;
}

.crumbs .here {
    color: #757575;
}

.notice {
    display: flex;
    gap: 8px;
    padding: 7px 11px;
    margin-bottom: 10px;
    background: #fff6dc;
    color: #858278;
    font-size: 11px;
    line-height: 15px;
}

.notice a {
    color: #6e9bbd;
}

.rules h2 {
    margin-top: 18px;
    color: #797979;
    font-size: 24px;
    line-height: 36px;
}

.intro {
    margin-top: 20px;
    line-height: 20px;
}

.commands {
    margin-top: 43px;
    border-top: 1px solid #e8e8e8;
    padding: 11px 0 12px 7px;
}

.commands button {
    display: flex;
    align-items: center;
    gap: 4px;
    height: 20px;
    color: #757575;
    font-weight: 600;
}

.commands svg {
    color: #74aee0;
}

.rules table {
    width: 100%;
    margin-top: 21px;
    border-collapse: collapse;
    text-align: left;
}

.rules th {
    height: 40px;
    padding: 0;
    font-size: 10px;
    font-weight: 400;
    border-bottom: 1px solid #e8e8e8;
}

.rules .pick {
    width: 55px;
}

.rules td {
    height: 40px;
    padding: 0;
    font-weight: 600;
    color: #999;
    border-bottom: 1px solid #f0f0f0;
}

.rules td:first-child svg {
    margin-left: 15px;
}

.rules .selected td {
    background: #f2f1f0;
    color: #757575;
}

/* side panel over the page */

.panel {
    position: absolute;
    top: 0;
    right: 0;
    bottom: 0;
    left: 398px;
    display: flex;
    flex-direction: column;
    background: #fff;
    box-shadow: 0 24px 60px rgba(0, 0, 0, 0.3), 0 4px 14px rgba(0, 0, 0, 0.2);
}

.panel-head {
    display: flex;
    align-items: center;
    justify-content: space-between;
    height: 42px;
    flex: none;
    padding: 0 14px 0 46px;
    border-bottom: 1px solid #eeeeee;
    color: #000;
    font-size: 13px;
    font-weight: 600;
}

.panel-body {
    flex: 1;
    min-height: 0;
    display: flex;
}

.steps {
    width: 292px;
    flex: none;
    padding: 37px 0 0 46px;
    border-right: 1px solid #eaeaea;
    list-style: none;
    color: #55534f;
}

.steps li {
    position: relative;
    height: 56px;
    padding-left: 25px;
    line-height: 22px;
}

.steps li::before {
    content: "";
    position: absolute;
    left: -1px;
    top: 3px;
    width: 15px;
    height: 15px;
    border: 2px solid #979593;
    border-radius: 8px;
}

.steps li:not(:last-child)::after {
    content: "";
    position: absolute;
    left: 6px;
    top: 22px;
    width: 1px;
    height: 33px;
    background: #8a8886;
}

.steps .on {
    color: #323130;
    font-size: 13px;
    font-weight: 600;
}

.steps .on::before {
    background: #0078d4;
    border-color: #0078d4;
}

.conditions {
    flex: 1;
    padding: 69px 60px 0 44px;
}

.conditions h1 {
    font-size: 37px;
    line-height: 56px;
}

.conditions p {
    margin: 49px 0 28px;
    line-height: 20px;
    color: #484644;
}

.field {
    margin-bottom: 29px;
}

.field:nth-of-type(1) {
    margin-bottom: 15px;
}

.field label {
    display: block;
    height: 25px;
    line-height: 25px;
    font-weight: 600;
}

.field i {
    color: #a4262c;
    font-style: normal;
}

.field input,
.field select {
    width: 100%;
    height: 30px;
    padding: 0 8px;
    border: 1px solid #807e7c;
    border-radius: 2px;
    background: #fff;
    color: #484644;
    font: inherit;
    appearance: none;
}

.field input,
.field select,
.select {
    display: block;
}

.row {
    position: relative;
    display: flex;
    align-items: center;
    gap: 12px;
}

.row > button {
    color: #2b88d8;
    margin-left: 8px;
}

.row > button + button {
    margin-left: 4px;
}

.select {
    position: relative;
    width: 244px;
}

.select svg {
    position: absolute;
    right: 7px;
    top: 9px;
    width: 12px;
    height: 12px;
    color: #8a8886;
}

.select.off select {
    border-color: #f3f2f1;
    background: #f3f2f1;
    opacity: 1;
}

.menu {
    position: absolute;
    z-index: 2;
    left: 244px;
    top: -84px;
    width: 244px;
    background: #fff;
    border-radius: 2px;
    box-shadow: 0 3px 7px rgba(0, 0, 0, 0.13), 0 1px 3px rgba(0, 0, 0, 0.15);
}

.options {
    display: grid;
    grid-auto-rows: 1fr;
    height: 335px;
    border-bottom: 1px solid #eaeaea;
}

.menu button {
    width: 100%;
    padding: 0 9px;
    text-align: left;
}

.menu .picked {
    background: #ebeae8;
}

.menu .hover {
    background: #f3f2f1;
}

.menu .all {
    height: 35px;
}

.mark {
    position: absolute;
    border: 4px solid #fc0056;
    pointer-events: none;
}

.mark-option {
    left: -5px;
    right: -4px;
    top: 37px;
    height: 33px;
}

.mark-select {
    z-index: 3;
    left: -6px;
    top: -7px;
    width: 255px;
    height: 45px;
}

.panel-foot {
    display: flex;
    height: 59px;
    flex: none;
    border-top: 1px solid #f0f0f0;
}

.panel-foot div {
    margin-left: 291px;
    padding: 14px 0 0 155px;
    border-left: 1px solid #eaeaea;
}

.panel-foot button {
    width: 76px;
    height: 30px;
    border-radius: 2px;
    background: #f3f2f1;
    color: #b5b3b1;
    font-weight: 600;
}

/* windows taskbar */

.taskbar {
    display: flex;
    align-items: stretch;
    height: 37px;
    flex: none;
    background: #d3daea;
    color: #1b1b1b;
    font-size: 13px;
}

.start {
    width: 45px;
    display: flex;
    align-items: center;
    justify-content: center;
}

.search {
    display: flex;
    align-items: center;
    gap: 10px;
    width: 268px;
    padding-left: 10px;
    background: #fff;
    border: 1px solid #c8ccd6;
}

.search input {
    flex: 1;
    min-width: 0;
    border: 0;
    padding: 0;
    font: inherit;
}

.search input::placeholder {
    color: #333;
}

.search .island {
    align-self: flex-end;
}

.apps {
    display: flex;
    margin-left: 2px;
}

.apps button {
    width: 46px;
    display: flex;
    align-items: center;
    justify-content: center;
    position: relative;
}

.apps .focus {
    background: #eef1f7;
}

.apps .open::after {
    content: "";
    position: absolute;
    left: 4px;
    right: 4px;
    bottom: 0;
    height: 2px;
    background: #0a74cf;
}

.apps .focus::after {
    left: 0;
    right: 0;
}

.apps .more::after {
    background: linear-gradient(90deg, #0a74cf 80%, #6fabe0 80%);
}

.tray {
    display: flex;
    align-items: center;
    gap: 7px;
    margin-left: auto;
    padding-right: 22px;
}

.tray .up {
    margin-left: 16px;
}

.lang {
    margin: 0 3px;
    font-size: 11px;
}

.clock {
    margin-right: 10px;
    font-size: 11px;
    line-height: 17px;
    text-align: center;
}
```
